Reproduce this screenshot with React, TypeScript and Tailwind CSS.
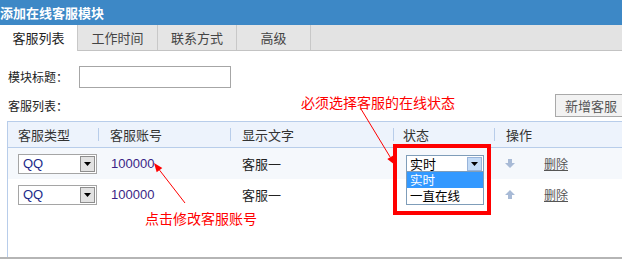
import React from 'react'

const tabs = ['客服列表', '工作时间', '联系方式', '高级']
const tabWidths = ['w-[78px]', 'w-[80px]', 'w-[79px]', 'w-[74px]']

function QQSelect() {
  return (
    <div className="flex h-[20px] w-[79px] items-center border border-[#a5a5a5] bg-white">
      <span className="flex-1 pl-[4px] text-[13px] leading-none text-[#1c2a8a]">QQ</span>
      <span className="mr-px flex h-[16px] w-[15px] items-center justify-center border border-[#8e8e8e] bg-[#e2e2e2]">
        <svg width="7" height="4" viewBox="0 0 7 4"><path d="M0 0h7L3.5 4z" fill="#000" /></svg>
      </span>
    </div>
  )
}

function MoveIcon({ up }: { up?: boolean }) {
  return (
    <svg width="10" height="9" viewBox="0 0 10 9">
      <path d={up ? 'M5 0l5 5H7v4H3V5H0z' : 'M3 0h4v4h3L5 9 0 4h3z'} fill="#a8bad6" />
    </svg>
  )
}

export default function App() {
  return (
    <div className="relative h-[259px] w-[622px] overflow-hidden bg-white font-['Liberation_Sans','Noto_Sans_CJK_SC',sans-serif] text-[12px] text-[#222]">
      {/* title */}
      <div className="h-[25px] bg-[#3d88c6] pl-0 font-['Noto_Sans_CJK_SC',sans-serif] text-[13px] font-bold leading-[25px] text-white">
        添加在线客服模块
      </div>

      {/* tabs */}
      <div className="flex h-[26px] items-start border-b border-[#c3c3c3] bg-[#e3e3e3] font-['Noto_Sans_CJK_SC',sans-serif] text-[13px]">
        {tabs.map((t, i) => (
          <div
            key={t}
            className={`flex items-center justify-center border-r border-[#c8c8c8] ${tabWidths[i]} ${
              i === 0 ? 'h-[26px] bg-white text-[#222]' : 'h-[25px] bg-[#e5e5e5] text-[#444]'
            }`}
          >
            {t}
          </div>
        ))}
      </div>

      {/* content */}
      <div className="flex h-[206px] flex-col pl-[7px]">
        <div className="mt-[15px] flex h-[22px] items-center">
          <span className="w-[72px] pl-px font-['Noto_Sans_CJK_SC',sans-serif]">模块标题：</span>
          <div className="h-[22px] w-[152px] border border-[#a6a6a6] bg-white" />
        </div>

        <div className="mt-[6px] flex h-[23px] items-center justify-between">
          <span className="pl-px font-['Noto_Sans_CJK_SC',sans-serif]">客服列表：</span>
          <button className="-mr-[5px] h-[23px] w-[72px] border border-[#a9a9a9] bg-[#f2f2f2] font-['Noto_Sans_CJK_SC',sans-serif] text-[13px] text-[#555]">
            新增客服
          </button>
        </div>

        <div className="mt-[4px] flex-1 border-l border-t border-[#b8cdea]">
          {/* header */}
          <div className="grid h-[26px] grid-cols-[90px_132px_163px_101px_1fr] border-b border-[#b8cdea] bg-[#edf3fc] font-['Noto_Sans_CJK_SC',sans-serif] text-[13px] text-[#333]">
            <div className="flex items-center pl-[10px]">客服类型</div>
            <div className="flex items-center">
              <span className="h-[13px] w-px bg-[#b8cdea]" />
              <span className="ml-[11px]">客服账号</span>
            </div>
            <div className="flex items-center">
              <span className="h-[13px] w-px bg-[#b8cdea]" />
              <span className="ml-[11px]">显示文字</span>
            </div>
            <div className="flex items-center">
              <span className="h-[13px] w-px bg-[#b8cdea]" />
              <span className="ml-[9px]">状态</span>
            </div>
            <div className="flex items-center">
              <span className="h-[13px] w-px bg-[#b8cdea]" />
              <span className="ml-[11px]">操作</span>
            </div>
          </div>

          {/* row 1 */}
          <div className="grid h-[31px] grid-cols-[90px_132px_163px_101px_1fr] bg-[#f5f8fc]">
            <div className="flex items-center pl-[10px]"><QQSelect /></div>
            <div className="flex items-center pl-[13px] text-[13px] text-[#3a1f86]">100000</div>
            <div className="flex items-center pl-[12px] font-['Noto_Sans_CJK_SC',sans-serif] text-[13px]">客服一</div>
            <div className="flex items-center pl-[13px]">
              <div className="relative">
                <div className="flex h-[17px] w-[78px] items-center border border-[#7f9db9] bg-white">
                  <span className="flex-1 pl-[3px] font-['Noto_Sans_CJK_SC',sans-serif] text-[13px] leading-none text-black">实时</span>
                  <span className="mr-px flex h-[14px] w-[15px] items-center justify-center border border-[#98b4da] bg-[#c3dbf6]">
                    <svg width="7" height="4" viewBox="0 0 7 4"><path d="M0 0h7L3.5 4z" fill="#000" /></svg>
                  </span>
                </div>
                <div className="absolute left-0 top-full z-10 w-[78px] border border-t-0 border-[#7f9db9] bg-white font-['Noto_Sans_CJK_SC',sans-serif] text-[12.5px] leading-[16px]">
                  <div className="flex h-[16px] items-center bg-[#3399ff] pl-[3px] text-white">实时</div>
                  <div className="flex h-[16px] items-center pl-[3px] text-black">一直在线</div>
                </div>
              </div>
            </div>
            <div className="flex items-center pl-[11px]">
              <MoveIcon />
              <span className="ml-[29px] font-['Noto_Sans_CJK_SC',sans-serif] text-[#555] underline">删除</span>
            </div>
          </div>

          {/* row 2 */}
          <div className="grid h-[31px] grid-cols-[90px_132px_163px_101px_1fr] bg-white">
            <div className="flex items-center pl-[10px]"><QQSelect /></div>
            <div className="flex items-center pl-[13px] text-[13px] text-[#3a1f86]">100000</div>
            <div className="flex items-center pl-[12px] font-['Noto_Sans_CJK_SC',sans-serif] text-[13px]">客服一</div>
            <div />
            <div className="flex items-center pl-[11px]">
              <MoveIcon up />
              <span className="ml-[29px] font-['Noto_Sans_CJK_SC',sans-serif] text-[#555] underline">删除</span>
            </div>
          </div>
        </div>
      </div>

      <div className="h-[2px] bg-[#b5b5b5]" />

      {/* annotations */}
      <div className="absolute left-[301px] top-[94px] font-['Noto_Sans_CJK_SC',sans-serif] text-[14px] leading-[16px] text-[#ff0000]">
        必须选择客服的在线状态
      </div>
      <div className="absolute left-[145px] top-[210px] font-['Noto_Sans_CJK_SC',sans-serif] text-[14px] leading-[16px] text-[#ff0000]">
        点击修改客服账号
      </div>
      <div className="absolute left-[393px] top-[144px] z-20 h-[71px] w-[98px] border-4 border-[#ff0000]" />
      <svg className="pointer-events-none absolute left-0 top-0 z-20" width="622" height="259">
        <line x1="361" y1="109" x2="390.3" y2="157.3" stroke="#ff0000" strokeWidth="1" />
        <polygon points="395,165 387.3,159.1 393.3,155.5" fill="#ff0000" />
        <line x1="185" y1="203" x2="159.5" y2="170.1" stroke="#ff0000" strokeWidth="1" />
        <polygon points="154,163 162.3,168 156.7,172.3" fill="#ff0000" />
      </svg>
    </div>
  )
}
